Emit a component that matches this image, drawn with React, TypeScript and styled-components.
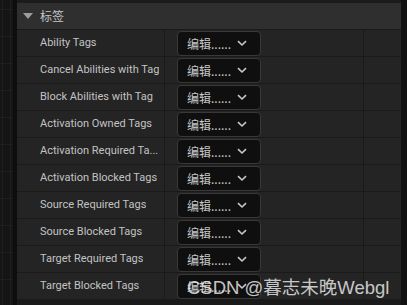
import React from 'react';
import styled, { createGlobalStyle } from 'styled-components';

const GlobalStyle = createGlobalStyle`
  html, body {
    margin: 0;
    padding: 0;
    background: #141414;
  }
  body {
    font-family: 'Roboto', 'Noto Sans CJK SC', sans-serif;
  }
`;

const Page = styled.div`
  display: flex;
  width: 407px;
  height: 305px;
  overflow: hidden;
  position: relative;
`;

const Viewport = styled.div`
  width: 13px;
  flex-shrink: 0;
  background-color: #151515;
  background-image:
    linear-gradient(#1f1f1f 1px, transparent 1px),
    linear-gradient(90deg, #1f1f1f 1px, transparent 1px);
  background-size: 8px 27px, 8px 27px;
  background-position: 0 9px, 2px 0;
  border-right: 4px solid #0e0e0e;
`;

const Panel = styled.div`
  flex: 1;
  display: flex;
  flex-direction: column;
  background: #1a1a1a;
  border-top: 3px solid #1c1c1c;
`;

const Header = styled.div`
  height: 26px;
  display: flex;
  align-items: center;
  gap: 7px;
  padding-left: 6px;
  padding-bottom: 2px;
  box-sizing: border-box;
  background: #2f2f2f;
  color: #c6c6c6;
  font-size: 12px;
  font-family: 'Noto Sans CJK SC', sans-serif;
  flex-shrink: 0;
`;

const Caret = styled.span`
  width: 0;
  height: 0;
  border-left: 5px solid transparent;
  border-right: 5px solid transparent;
  border-top: 6px solid #9c9c9c;
  margin-top: 1px;
`;

const Rows = styled.div`
  display: flex;
  flex-direction: column;
  gap: 1px;
  padding-top: 1px;
`;

const Row = styled.div`
  display: grid;
  grid-template-columns: 147px 198px 1fr;
  column-gap: 1px;
  height: 26px;
`;

const Cell = styled.div<{ $pad?: number }>`
  background: #242424;
  display: flex;
  align-items: center;
  padding-left: ${({ $pad }) => $pad ?? 0}px;
  min-width: 0;
`;

const Label = styled.span`
  color: #c3c3c3;
  font-size: 11px;
  white-space: nowrap;
  overflow: hidden;
  text-overflow: ellipsis;
  margin-top: -1px;
`;

const EditButton = styled.div`
  box-sizing: border-box;
  width: 84px;
  height: 25px;
  background: #0f0f0f;
  border: 1px solid #383838;
  border-radius: 4px;
  display: flex;
  align-items: center;
  padding-left: 9px;
  gap: 6px;
  color: #c8c8c8;
  font-size: 12px;
  font-family: 'Noto Sans CJK SC', sans-serif;
`;

const EditText = styled.span`
  white-space: nowrap;
`;

const Watermark = styled.div`
  position: absolute;
  left: 187px;
  top: 273px;
  font-size: 18.5px;
  color: rgba(230, 230, 230, 0.85);
  font-family: 'Liberation Sans', 'Noto Sans CJK SC', sans-serif;
  white-space: nowrap;
  pointer-events: none;
`;

const RightEdge = styled.div`
  width: 6px;
  flex-shrink: 0;
  background: #111111;
`;

const Chevron = () => (
  <svg width="10" height="7" viewBox="0 0 10 7">
    <path d="M1 1.2 L5 5 L9 1.2" fill="none" stroke="#c8c8c8" strokeWidth="1.6" />
  </svg>
);

// labels as the details panel shows them (long ones get clipped by the editor)
const tags = [
  'Ability Tags',
  'Cancel Abilities with Tag',
  'Block Abilities with Tag',
  'Activation Owned Tags',
  'Activation Required Ta...',
  'Activation Blocked Tags',
  'Source Required Tags',
  'Source Blocked Tags',
  'Target Required Tags',
  'Target Blocked Tags',
];

export default function App() {
  return (
    <>
      <GlobalStyle />
      <Page>
        <Viewport />
        <Panel>
          <Header>
            <Caret />
            <span>标签</span>
          </Header>
          <Rows>
            {tags.map(t => (
              <Row key={t}>
                <Cell $pad={23}>
                  <Label>{t}</Label>
                </Cell>
                <Cell $pad={12}>
                  <EditButton>
                    <EditText>编辑......</EditText>
                    <Chevron />
                  </EditButton>
                </Cell>
                <Cell />
              </Row>
            ))}
          </Rows>
        </Panel>
        <RightEdge />
        <Watermark>CSDN @暮志未晚Webgl</Watermark>
      </Page>
    </>
  );
}
